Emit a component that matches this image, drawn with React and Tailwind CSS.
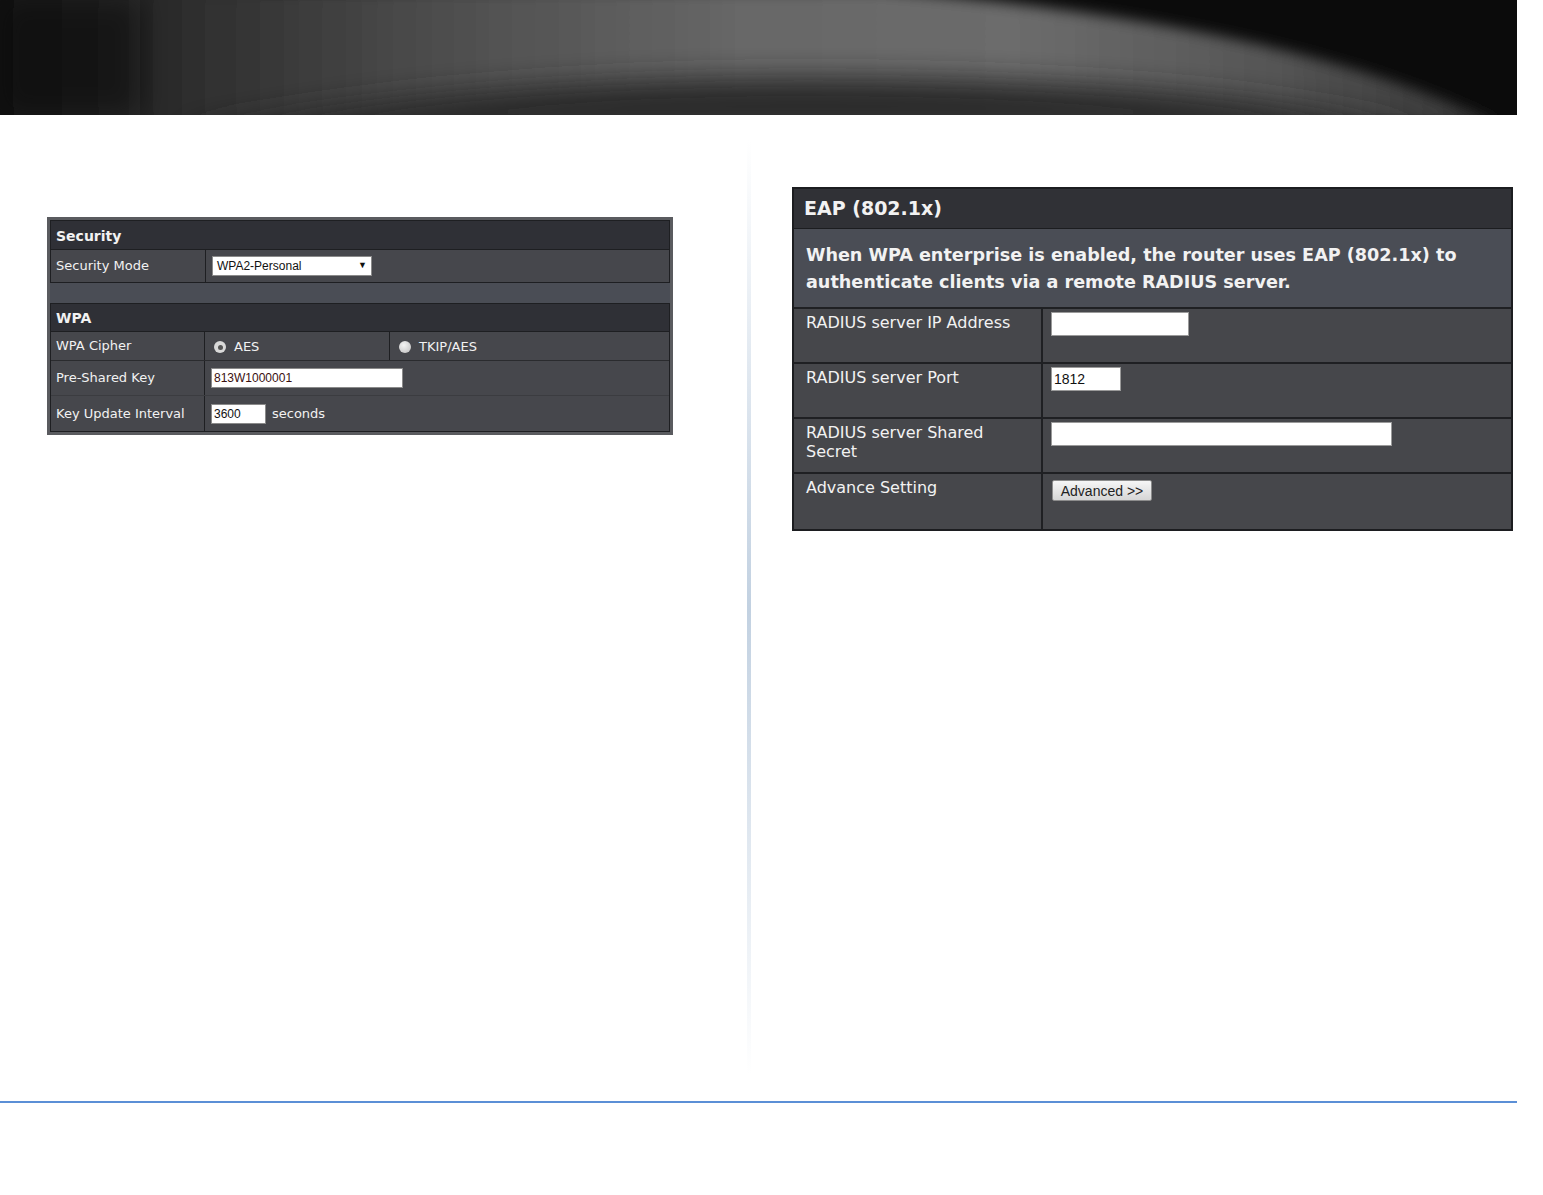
import React from "react";

const verdana = { fontFamily: '"DejaVu Sans", Verdana, sans-serif' };
const arial = { fontFamily: '"Liberation Sans", Arial, sans-serif' };

// 헤더 배경 그림
function HeaderArt() {
  return (
    <svg width="1517" height="115" viewBox="0 0 1517 115" className="block">
      <defs>
        <linearGradient id="band" x1="0" y1="0" x2="1" y2="0">
          <stop offset="0" stopColor="#0c0c0c" />
          <stop offset="0.12" stopColor="#2a2a2a" />
          <stop offset="0.3" stopColor="#4d4d4d" />
          <stop offset="0.5" stopColor="#676767" />
          <stop offset="0.68" stopColor="#6c6c6c" />
          <stop offset="0.85" stopColor="#555555" />
          <stop offset="1" stopColor="#333333" />
        </linearGradient>
        <filter id="soft" x="-20%" y="-50%" width="140%" height="200%">
          <feGaussianBlur stdDeviation="7" />
        </filter>
        <filter id="softer" x="-20%" y="-50%" width="140%" height="200%">
          <feGaussianBlur stdDeviation="14" />
        </filter>
      </defs>
      <rect width="1517" height="115" fill="#0b0b0b" />
      <path d="M-20,-10 L880,-10 Q1300,25 1500,125 L-20,125 Z" fill="url(#band)" filter="url(#soft)" />
      <path d="M170,135 Q480,72 880,78 Q1250,84 1430,135 Z" fill="#2c2c2c" filter="url(#softer)" />
      <rect x="0" y="0" width="140" height="115" fill="#080808" opacity="0.55" filter="url(#softer)" />
    </svg>
  );
}

function Radio({ checked }) {
  return checked ? (
    <span className="inline-flex w-[12px] h-[12px] rounded-full bg-[#d9d9d9] items-center justify-center">
      <span className="w-[5px] h-[5px] rounded-full bg-[#555]" />
    </span>
  ) : (
    <span className="inline-block w-[12px] h-[12px] rounded-full bg-[radial-gradient(circle_at_40%_35%,#f4f4f4,#bdbdbd)]" />
  );
}

// 왼쪽 보안 설정 패널
function SecurityPanel() {
  return (
    <div className="w-[626px] border-[3px] border-[#5a5b5f] bg-[#4a4d55] text-[#f2f2f2] text-[13px]" style={verdana}>
      <div className="border border-[#1e1f22]">
        <div className="h-[29px] bg-[#2f3036] flex items-center px-[5px] pt-[2px] font-bold text-[14px] border-b border-[#1e1f22]">
          Security
        </div>
        <div className="flex h-[32px] bg-[#46474c]">
          <div className="w-[155px] flex items-center pl-[5px] border-r border-[#1e1f22]">Security Mode</div>
          <div className="flex-1 flex items-center pl-[6px]">
            <div className="w-[160px] h-[20px] bg-white border border-[#8a8a8a] flex items-center justify-between px-[4px] text-[12px] text-[#111]" style={arial}>
              <span>WPA2-Personal</span>
              <span className="text-[9px]">▼</span>
            </div>
          </div>
        </div>
      </div>

      <div className="h-[20px]" />

      <div className="border border-[#1e1f22]">
        <div className="h-[28px] bg-[#2f3036] flex items-center px-[5px] pt-[2px] font-bold text-[14px] border-b border-[#1e1f22]">
          WPA
        </div>
        <div className="flex h-[29px] bg-[#46474c] border-b border-[#2a2b2e]">
          <div className="w-[154px] flex items-center pl-[5px] border-r border-[#1e1f22]">WPA Cipher</div>
          <div className="w-[185px] flex items-center pl-[9px] gap-[8px] border-r border-[#1e1f22] pt-[2px]">
            <Radio checked />
            <span>AES</span>
          </div>
          <div className="flex-1 flex items-center pl-[9px] gap-[8px] pt-[2px]">
            <Radio />
            <span>TKIP/AES</span>
          </div>
        </div>
        <div className="flex h-[35px] bg-[#46474c] border-b border-[#3b3c40]">
          <div className="w-[154px] flex items-center pl-[5px] border-r border-[#1e1f22]">Pre-Shared Key</div>
          <div className="flex-1 flex items-center pl-[6px]">
            <div className="w-[192px] h-[20px] bg-white border border-[#8a8a8a] flex items-center px-[2px] text-[12px] text-[#3a1010]" style={arial}>
              813W1000001
            </div>
          </div>
        </div>
        <div className="flex h-[35px] bg-[#46474c]">
          <div className="w-[154px] flex items-center pl-[5px] border-r border-[#1e1f22]">Key Update Interval</div>
          <div className="flex-1 flex items-center pl-[6px] gap-[6px]">
            <div className="w-[55px] h-[20px] bg-white border border-[#8a8a8a] flex items-center px-[2px] text-[12px] text-[#111]" style={arial}>
              3600
            </div>
            <span>seconds</span>
          </div>
        </div>
      </div>
    </div>
  );
}

function EapRow({ label, children, last }) {
  return (
    <div className={`flex h-[55px] bg-[#46474b] ${last ? "" : "border-b-2 border-[#1f2023]"}`}>
      <div className="w-[249px] pl-[12px] pt-[4px] leading-[19px] border-r-2 border-[#1f2023]">{label}</div>
      <div className="flex-1 pl-[8px] pt-[3px]">{children}</div>
    </div>
  );
}

// 오른쪽 EAP 패널
function EapPanel() {
  return (
    <div className="w-[721px] border-2 border-[#1c1d20] bg-[#46474b] text-[#f2f2f2] text-[16px]" style={verdana}>
      <div className="h-[40px] bg-[#303136] flex items-center pl-[10px] text-[19px] font-semibold border-b border-[#1c1d20]">
        EAP (802.1x)
      </div>
      <div className="h-[80px] bg-[#4a4d55] pl-[12px] pt-[13px] font-bold text-[17.6px] leading-[27px] border-b-2 border-[#1f2023]">
        When WPA enterprise is enabled, the router uses EAP (802.1x) to
        <br />
        authenticate clients via a remote RADIUS server.
      </div>
      <EapRow label="RADIUS server IP Address">
        <div className="w-[138px] h-[24px] bg-white border border-[#9a9a9a]" />
      </EapRow>
      <EapRow label="RADIUS server Port">
        <div className="w-[70px] h-[24px] bg-white border border-[#9a9a9a] flex items-center px-[2px] text-[14px] text-[#111]" style={arial}>
          1812
        </div>
      </EapRow>
      <EapRow label={<>RADIUS server Shared<br />Secret</>}>
        <div className="w-[341px] h-[24px] bg-white border border-[#9a9a9a]" />
      </EapRow>
      <EapRow label="Advance Setting" last>
        <button
          className="mt-[3px] ml-px w-[100px] h-[21px] rounded-[2px] border border-[#8c8c8c] bg-gradient-to-b from-[#f6f6f6] to-[#d6d6d6] text-[14px] text-[#222] leading-none"
          style={arial}
        >
          Advanced &gt;&gt;
        </button>
      </EapRow>
    </div>
  );
}

export default function App() {
  return (
    <div className="w-[1543px] h-[1195px] bg-white overflow-hidden">
      <HeaderArt />
      <div className="flex h-[986px]">
        <div className="w-[747px] pl-[47px] pt-[102px]">
          <SecurityPanel />
        </div>
        <div className="w-[4px] mt-[25px] h-[935px] bg-gradient-to-b from-white via-[#c2d1e1] to-white" />
        <div className="pl-[41px] pt-[72px]">
          <EapPanel />
        </div>
      </div>
      <div className="w-[1517px] h-[2px] bg-[#5b8fd6]" />
    </div>
  );
}
